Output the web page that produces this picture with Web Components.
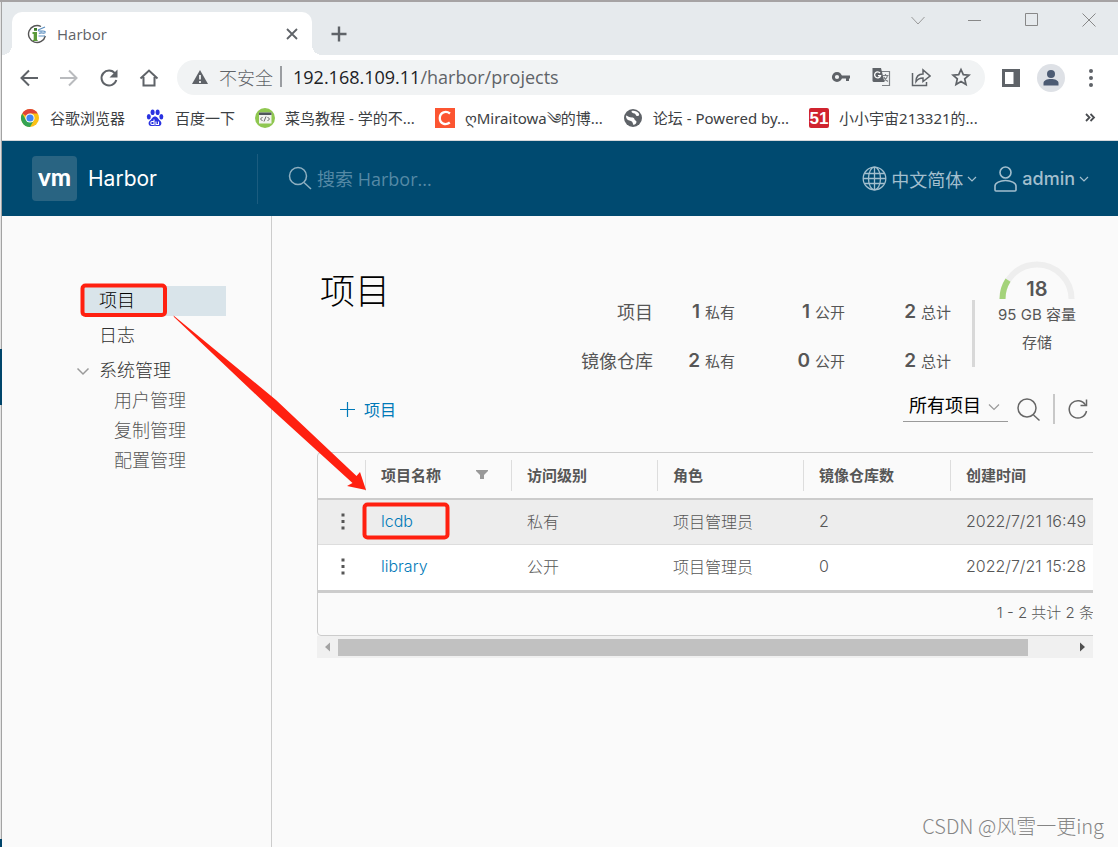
<!DOCTYPE html>
<html lang="zh-CN">
<head>
<meta charset="utf-8">
<title>Harbor</title>
<style>
  body {
    margin: 0;
    font-family: "Open Sans", "Noto Sans CJK SC", sans-serif;
    background: #fafafa;
    --harbor-font: Inter, "Noto Sans CJK SC", sans-serif;
    --text: #565656;
    --line: #ccc;
    --accent: #0079b8;
  }
</style>
</head>
<body>
<harbor-window>
  <tab-strip slot="chrome">Harbor</tab-strip>
  <address-bar slot="chrome"></address-bar>
  <bookmarks-bar slot="chrome">
    <book-mark icon="chrome">谷歌浏览器</book-mark>
    <book-mark icon="baidu">百度一下</book-mark>
    <book-mark icon="runoob">菜鸟教程 - 学的不...</book-mark>
    <book-mark icon="csdn">ღMiraitowa༄的博...</book-mark>
    <book-mark icon="globe">论坛 - Powered by...</book-mark>
    <book-mark icon="cto">小小宇宙213321的...</book-mark>
  </bookmarks-bar>
  <harbor-header slot="chrome">Harbor</harbor-header>
  <side-nav slot="side"></side-nav>
  <project-page></project-page>
</harbor-window>
<red-notes></red-notes>
<water-mark>CSDN @风雪一更ing</water-mark>

<script>
function define(name, css, html, setup) {
  const tpl = document.createElement('template');
  tpl.innerHTML = `<style>
    :host, *, *::before { box-sizing: border-box; }
    button { border: 0; padding: 0; margin: 0; background: none; font: inherit; color: inherit; display: flex; align-items: center; justify-content: center; }
    a { color: inherit; text-decoration: none; }
    svg { display: block; flex: none; }
    ${css}</style>${html}`;
  customElements.define(name, class extends HTMLElement {
    connectedCallback() {
      if (this.shadowRoot) return;
      const root = this.attachShadow({ mode: 'open' });
      root.append(tpl.content.cloneNode(true));
      if (setup) setup(this, root);
    }
  });
}

/* ---------- window frame ---------- */
define('harbor-window', `
  :host { display: flex; flex-direction: column; min-height: 100vh; border-top: 2px solid #a6a3a4; position: relative; padding-left: 2px; }
  .edge { position: absolute; left: 0; top: 0; bottom: 0; width: 2px; background: linear-gradient(#e3e3e3, #e3e3e3) left / 1px 100% no-repeat #a3a3a3; }
  .edge i { position: absolute; left: 0; top: 347px; width: 2px; height: 56px; background: #00456b; }
  .edge i + i { top: auto; bottom: 0; height: 8px; }
  .body { display: flex; flex: 1; }
  ::slotted(project-page) { flex: 1; min-width: 0; }
`, `<div class="edge"><i></i><i></i></div>
  <slot name="chrome"></slot>
  <div class="body"><slot name="side"></slot><slot></slot></div>`);

/* ---------- tab strip ---------- */
define('tab-strip', `
  :host { display: flex; height: 53px; background: #e6eaed; padding-left: 10px; }
  .tab { position: relative; align-self: flex-end; height: 43px; width: 300px; background: #fff; border-radius: 10px 10px 0 0; display: flex; align-items: center; gap: 10px; padding: 0 13px 0 15px; font-size: 15px; color: #5f6368; }
  .tab::before, .tab::after { content: ""; position: absolute; bottom: 0; width: 10px; height: 10px; }
  .tab::before { left: -10px; background: radial-gradient(circle at 0 0, transparent 10px, #fff 10px); }
  .tab::after { right: -10px; background: radial-gradient(circle at 100% 0, transparent 10px, #fff 10px); }
  .name { flex: 1; }
  .new { margin-left: 13px; width: 28px; align-self: center; margin-top: 10px; }
  .win { margin-left: auto; display: flex; height: 36px; }
  .win button { width: 57px; }
  .win button:last-child { width: 58px; }
`, `<div class="tab">
    <svg width="20" height="20" viewBox="0 0 20 20" fill="none"><path d="M14 2.500A8.500 8.500 0 1 0 18.300 12" stroke="#555" stroke-width="1.400"/><path d="M5.500 8h4.500v7.500l1 1.500H5.500l1.200-1.500V10H5.500z" fill="#5a9a3a"/><path d="M7 4h3v2.800H7z" fill="#3f7a2c"/><path d="M11 6l7-3M11 6.500c3 2 5-1 7.500 1.500M12 9.500c3-2 4 1 6.500-1M11.500 12H18" stroke="#5c8fc0" stroke-width="1.200"/></svg>
    <span class="name"><slot></slot></span>
    <button aria-label="关闭标签页"><svg width="14" height="14" viewBox="0 0 14 14"><path d="M2 2l10 10M12 2L2 12" stroke="#5f6368" stroke-width="1.800"/></svg></button>
  </div>
  <button class="new" aria-label="新标签页"><svg width="16" height="16" viewBox="0 0 16 16"><path d="M8 .5v15M.5 8h15" stroke="#5f6368" stroke-width="2.400"/></svg></button>
  <div class="win">
    <button aria-label="搜索标签页"><svg width="14" height="14" viewBox="0 0 14 14"><path d="M.5 4L7 11l6.500-7" stroke="#999" fill="none"/></svg></button>
    <button aria-label="最小化"><svg width="14" height="14" viewBox="0 0 14 14"><path d="M0 7.500h13" stroke="#888"/></svg></button>
    <button aria-label="最大化"><svg width="14" height="14" viewBox="0 0 14 14"><path d="M.5.5h12v12H.5z" stroke="#888" fill="none"/></svg></button>
    <button aria-label="关闭"><svg width="14" height="14" viewBox="0 0 14 14"><path d="M.5.5l13 13M13.500.5l-13 13" stroke="#888"/></svg></button>
  </div>`);

/* ---------- address bar ---------- */
define('address-bar', `
  :host { display: flex; align-items: center; height: 45px; background: #fff; color: #5f6368; padding: 0 15px; }
  button { width: 24px; height: 24px; }
  .nav { display: flex; gap: 16px; margin-right: 16px; }
  .pill { flex: 1; display: flex; align-items: center; height: 35px; border-radius: 18px; background: #f1f3f4; padding: 0 12px 2px 14px; font-size: 18px; }
  .warn { margin-right: 10px; }
  .safe { font-weight: 300; }
  .bar { width: 2px; height: 21px; background: #9a9da1; margin: 0 11px 0 7px; }
  .url { flex: 1; white-space: nowrap; font-size: 18px; }
  .url b { font-weight: 400; color: #202124; }
  .acts { display: flex; gap: 16px; }
  .end { display: flex; align-items: center; gap: 14px; margin-left: 14px; }
  .avatar { width: 28px; height: 28px; border-radius: 50%; background: #dee1e6; }
`, `<div class="nav">
    <button aria-label="后退"><svg width="20" height="20" viewBox="0 0 20 20" fill="none" stroke="#5f6368" stroke-width="2"><path d="M19 10H3M10 2.500L2.500 10l7.500 7.500"/></svg></button>
    <button aria-label="前进"><svg width="20" height="20" viewBox="0 0 20 20" fill="none" stroke="#b9bbbe" stroke-width="2"><path d="M1 10h16M10 2.500l7.500 7.500-7.500 7.500"/></svg></button>
    <button aria-label="重新加载"><svg width="20" height="20" viewBox="0 0 20 20" fill="none"><path d="M16 5.500A7.500 7.500 0 1 0 17.300 12" stroke="#5f6368" stroke-width="2"/><path d="M18.500 1.500v8h-8z" fill="#5f6368"/></svg></button>
    <button aria-label="主页"><svg width="20" height="20" viewBox="0 0 20 20" fill="none" stroke="#5f6368" stroke-width="2"><path d="M1.500 10.500L10 2.500l8.500 8M4.500 9v8.500h11V9"/></svg></button>
  </div>
  <div class="pill">
    <svg class="warn" width="18" height="18" viewBox="0 0 18 18"><path d="M9 2l8 14H1z" fill="#5f6368"/><path d="M9 7v4.500M9 13v2" stroke="#f1f3f4" stroke-width="1.800"/></svg>
    <span class="safe">不安全</span><span class="bar"></span>
    <span class="url"><b>192.168.109.11</b>/harbor/projects</span>
    <div class="acts">
      <button aria-label="密码"><svg width="20" height="20" viewBox="0 0 20 20"><circle cx="6" cy="10" r="3.600" fill="none" stroke="#5f6368" stroke-width="3"/><path d="M9 8.500h10v3h-1V14h-3v-2.500H9z" fill="#5f6368"/></svg></button>
      <button aria-label="翻译"><svg width="20" height="20" viewBox="0 0 20 20"><path d="M8 4.500h10.500v14H11" fill="#f1f3f4" stroke="#7c8084" stroke-width="1.200"/><path d="M1.500 1h8.500l3.500 14H3a1.500 1.500 0 0 1-1.500-1.500z" fill="#5f6368"/><path d="M9 6A3 3 0 1 0 9.500 8.700H7" fill="none" stroke="#fff" stroke-width="1.300"/><path d="M12 8.500h5.500M14.500 7v1.500M16.500 8.500c-.5 3-2 4-3.500 5.500M13 10c.5 2 2 3.500 4 4.500" fill="none" stroke="#7c8084" stroke-width="1.200"/></svg></button>
      <button aria-label="分享"><svg width="20" height="20" viewBox="0 0 20 20" fill="none" stroke="#5f6368" stroke-width="1.500"><path d="M1.500 6v12.500h14V15"/><path d="M5 14.500c0-5.500 3-7.500 7-7.500V3l7 6-7 5.500v-3.500c-3.500 0-5 .5-7 3.500z"/></svg></button>
      <button aria-label="收藏"><svg width="20" height="20" viewBox="0 0 20 20" fill="none" stroke="#5f6368" stroke-width="1.700"><path d="M10 2.500l2.300 5.200 5.700.5-4.300 3.700 1.300 5.600-5-3-5 3 1.300-5.600L2 8.200l5.700-.5z"/></svg></button>
    </div>
  </div>
  <div class="end">
    <button aria-label="侧边栏"><svg width="20" height="20" viewBox="0 0 20 20"><path d="M1 1h18v18H1z" fill="#5f6368"/><path d="M4 4h8.500v12H4z" fill="#fff"/></svg></button>
    <button class="avatar" aria-label="用户"><svg width="20" height="20" viewBox="0 0 20 20" fill="#4c5b73"><circle cx="10" cy="6" r="4"/><path d="M2.500 17.500v-2.500c0-2.500 3.500-4 7.500-4s7.500 1.500 7.500 4v2.500z"/></svg></button>
    <button aria-label="菜单"><svg width="20" height="20" viewBox="0 0 20 20" fill="#5f6368"><circle cx="10" cy="3" r="2"/><circle cx="10" cy="10" r="2"/><circle cx="10" cy="17" r="2"/></svg></button>
  </div>`);

/* ---------- bookmarks ---------- */
define('bookmarks-bar', `
  :host { display: flex; align-items: center; height: 41px; background: #fff; border-bottom: 1px solid #d5d8db; padding: 0 20px 4px 18px; gap: 20px; font-family: "Noto Sans", "Noto Sans CJK SC", sans-serif; font-size: 15px; color: #3c4043; white-space: nowrap; }
  button { margin-left: auto; }
`, `<slot></slot><button aria-label="更多书签"><svg width="16" height="16" viewBox="0 0 16 16" fill="none" stroke="#4a4d51" stroke-width="1.800"><path d="M4 4l3.500 3.500L4 11M8.500 4L12 7.500 8.500 11"/></svg></button>`);

const bookmarkIcons = {
  chrome: `<circle cx="10" cy="10" r="9" fill="#fbc116"/><path d="M10 10L2.200 5.500A9 9 0 0 1 17.800 5.500H10z" fill="#df4438"/><path d="M2.200 5.500A9 9 0 0 0 10 19l3.900-6.800L6 12z" fill="#34a353"/><circle cx="10" cy="10" r="4.600" fill="#fff"/><circle cx="10" cy="10" r="3.600" fill="#4285f4"/>`,
  baidu: `<g fill="#2932e1"><ellipse cx="3.800" cy="8.800" rx="2" ry="2.700"/><ellipse cx="7.600" cy="4.300" rx="2" ry="2.800"/><ellipse cx="12.600" cy="4.300" rx="2" ry="2.800"/><ellipse cx="16.300" cy="8.800" rx="2" ry="2.700"/><path d="M10 8.500c2.500 0 3 2.500 5 4s2 5-1 5.500c-1.500.3-2.500-.2-4-.2s-2.500.5-4 .2c-3-.5-3-4-1-5.500s2.500-4 5-4z"/></g><path d="M9 11.500v5H6.800c-1.300 0-1.300-3 0-3H9M11 13.500v3h2.500v-3" fill="none" stroke="#fff" stroke-width="1.100"/>`,
  runoob: `<circle cx="10" cy="10" r="10" fill="#8fc750"/><path d="M4 4.500h12.500v11H4z" fill="#f2f3ef"/><path d="M4 4.500h12.500V7H4z" fill="#50565b"/><path d="M7.500 9L5.500 11l2 2M12.500 9l2 2-2 2M11 8.500l-2 5" fill="none" stroke="#666" stroke-width="1"/>`,
  csdn: `<path d="M0 0h20v20H0z" fill="#fc5531"/><path d="M15 5.500C11 2.500 5 4 4.800 10c-.1 6 6 7.500 10 4.500" fill="none" stroke="#fff" stroke-width="2.300"/>`,
  globe: `<circle cx="10" cy="10" r="9" fill="#5f6368"/><path d="M3 7.500C5 8 6 9.500 9 9.500s2 2.500 3.500 3S14 16 10.500 17c-1-2-.5-3-2.500-4s-5-.5-5-5.500zM8.500 3c0 2 1.500 2 3 2.500s1 2.500 3 2.500 2-1.500 1-3-4.500-3-7-2z" fill="#fff"/>`,
  cto: `<rect width="20" height="20" rx="2" fill="#d0232e"/><text x="10" y="16" text-anchor="middle" font-family="Liberation Sans" font-weight="700" font-size="17" fill="#fff">51</text>`
};
define('book-mark', `
  :host { display: block; }
  a { display: flex; align-items: center; gap: 10px; height: 20px; line-height: 20px; }
  span { height: 20px; display: flex; align-items: center; }
`, `<a href="#"><svg width="20" height="20" viewBox="0 0 20 20"></svg><span><slot></slot></span></a>`,
(host, root) => { root.querySelector('svg').innerHTML = bookmarkIcons[host.getAttribute('icon')]; });

/* ---------- Harbor header ---------- */
define('harbor-header', `
  :host { display: flex; align-items: center; height: 75px; background: #004a70; padding: 0 29px 0 30px; font-family: var(--harbor-font); color: #a3bfce; }
  .brand { display: flex; align-items: center; gap: 11px; width: 226px; height: 50px; border-right: 1px solid #1b5c7f; font-size: 21px; color: #fff; }
  .logo { width: 45px; height: 45px; border-radius: 4px; background: #296482; display: flex; align-items: center; justify-content: center; font: 900 24px/1 Lato, sans-serif; padding-bottom: 4px; }
  label { display: flex; align-items: center; gap: 4px; flex: 1; margin-left: 30px; }
  input { border: 0; background: none; outline: 0; padding: 0; flex: 1; min-width: 0; font: 18px "Open Sans", "Noto Sans CJK SC", sans-serif; color: #fff; }
  input::placeholder { color: #5589a5; opacity: 1; }
  .menu { gap: 4px; font-size: 18px; font-weight: 500; }
  .user { margin-left: 16px; }
  .menu.lang { font-weight: 400; }
`, `<a class="brand" href="#"><span class="logo">vm</span><span><slot></slot></span></a>
  <label><svg width="25" height="25" viewBox="0 0 25 25" fill="none" stroke="#8fb0c1" stroke-width="1.500"><circle cx="10" cy="10" r="8.500"/><path d="M16 16.500l7 6.500"/></svg>
  <input type="search" aria-label="搜索" placeholder="搜索 Harbor..."></label>
  <button class="menu lang"><svg width="25" height="25" viewBox="0 0 25 25" fill="none" stroke="#a3bfce" stroke-width="1.300"><circle cx="12.500" cy="12.500" r="11.300"/><ellipse cx="12.500" cy="12.500" rx="6" ry="11.300"/><path d="M12.500 1v23M1 12.500h23M3 7.500h19M3 17.500h19"/></svg>中文简体<svg width="10" height="10" viewBox="0 0 10 10" fill="none" stroke="#a3bfce" stroke-width="1.200"><path d="M1 3l4 4 4-4"/></svg></button>
  <button class="menu user"><svg width="25" height="28" viewBox="0 0 25 28" fill="none" stroke="#a3bfce" stroke-width="1.600"><circle cx="12.500" cy="7.500" r="5.500"/><path d="M2 25v-4c0-3 5-5.500 10.500-5.500S23 18 23 21v4c0 .7-.5 1-1 1H3c-.6 0-1-.4-1-1z"/></svg>admin<svg width="10" height="10" viewBox="0 0 10 10" fill="none" stroke="#a3bfce" stroke-width="1.200"><path d="M1 3l4 4 4-4"/></svg></button>`);

/* ---------- side navigation ---------- */
define('side-nav', `
  :host { display: block; width: 270px; border-right: 1px solid var(--line); padding: 70px 45px 0 79px; font: 300 18px/30px var(--harbor-font); color: #313131; }
  a { display: block; padding-left: 18px; height: 30px; margin-bottom: 5px; }
  a.on { background: #d9e4ea; color: #000; }
  .group { height: 30px; gap: 9px; margin-left: -5px; }
  ul { list-style: none; margin: 0; padding: 0; }
  li a { padding-left: 33px; margin: 0; color: var(--text); }
`, `<nav><a class="on" href="#">项目</a><a href="#">日志</a>
  <button class="group"><svg width="14" height="14" viewBox="0 0 14 14" fill="none" stroke="#9a9a9a" stroke-width="1.500"><path d="M1.500 4.500L7 10l5.500-5.500"/></svg>系统管理</button>
  <ul><li><a href="#">用户管理</a></li><li><a href="#">复制管理</a></li><li><a href="#">配置管理</a></li></ul></nav>`);

/* ---------- statistics ---------- */
define('stat-count', `
  :host { display: flex; align-items: baseline; justify-content: flex-end; gap: 5px; font-size: 15px; line-height: 24px; }
  b { font-size: 19px; font-weight: 600; }
`, `<b></b><slot></slot>`, (host, root) => { root.querySelector('b').textContent = host.getAttribute('value'); });

define('storage-gauge', `
  :host { display: flex; flex-direction: column; align-items: center; width: 84px; text-align: center; font-size: 15px; }
  .dial { position: relative; width: 76px; height: 38px; margin-bottom: 2px; }
  b { position: absolute; left: 0; right: 0; bottom: -2px; font-size: 20px; line-height: 24px; font-weight: 600; }
  span { line-height: 28px; white-space: nowrap; }
`, `<div class="dial"><svg width="76" height="38" viewBox="0 0 76 38" fill="none" stroke-width="6"><path d="M3.500 38A34.500 34.500 0 0 1 72.500 38" stroke="#eee"/><path d="M3.500 38A34.500 34.500 0 0 1 9 19.200" stroke="#a4d37a"/></svg><b>18</b></div>
  <span>95 GB 容量</span><span>存储</span>`);

define('project-stats', `
  :host { display: flex; align-items: flex-start; color: var(--text); }
  .grid { display: grid; grid-template-columns: auto 82px 110px 106px; row-gap: 23px; margin-top: 39px; }
  .grid > span { font-size: 18px; line-height: 26px; text-align: right; }
  i { width: 3px; height: 67px; background: #d8d8d8; margin: 39px 20px 0 21px; }
`, `<div class="grid">
    <span>项目</span><stat-count value="1">私有</stat-count><stat-count value="1">公开</stat-count><stat-count value="2">总计</stat-count>
    <span>镜像仓库</span><stat-count value="2">私有</stat-count><stat-count value="0">公开</stat-count><stat-count value="2">总计</stat-count>
  </div><i></i><storage-gauge></storage-gauge>`);

/* ---------- data grid ---------- */
define('project-grid', `
  :host { display: block; color: var(--text); }
  .clip { overflow: hidden; }
  .grid { width: 824px; min-width: 100%; border: 1px solid var(--line); border-radius: 4px; }
  table { width: 100%; table-layout: fixed; border-collapse: separate; border-spacing: 0; font-size: 16px; }
  th, td { text-align: left; padding: 0; font-weight: 300; }
  th { height: 47px; border-bottom: 2px solid var(--line); font-size: 15px; font-weight: 700; vertical-align: top; }
  th div { display: flex; align-items: center; justify-content: space-between; height: 31px; margin-top: 7px; padding: 0 22px 3px 15px; border-left: 1px solid #ddd; }
  td { height: 45px; padding: 0 0 3px 16px; border-bottom: 1px solid #ddd; background: #fff; }
  tr.sel td { background: #ededed; }
  tr:last-child td { border-bottom: 0; }
  td:first-child { padding-left: 17px; }
  td a { color: var(--accent); }
  footer { border-top: 3px solid var(--line); height: 45px; padding: 7px 46px 0 0; text-align: right; font-size: 15px; line-height: 26px; font-weight: 300; }
  .bar { display: flex; align-items: center; height: 22px; background: #f0f0f0; padding: 0 5px; gap: 4px; }
  .track { flex: 1; height: 17px; }
  .track i { display: block; width: 94%; height: 17px; background: #c1c1c1; }
`, `<div class="clip"><div class="grid">
  <table>
    <colgroup><col style="width:47px"><col style="width:146px"><col style="width:146px"><col style="width:146px"><col style="width:147px"><col></colgroup>
    <thead><tr><th></th>
      <th><div>项目名称<svg width="14" height="12" viewBox="0 0 14 12"><path d="M1 2h12v1L9 7v4H5V7L1 3z" fill="#999"/></svg></div></th>
      <th><div>访问级别</div></th><th><div>角色</div></th><th><div>镜像仓库数</div></th><th><div>创建时间</div></th></tr></thead>
    <tbody></tbody>
  </table>
  <footer>1 - 2 共计 2 条</footer>
  </div></div>
  <div class="bar"><svg width="12" height="12" viewBox="0 0 12 12"><path d="M8 1.500v9L3 6z" fill="#a3a3a3"/></svg><div class="track"><i></i></div><svg width="12" height="12" viewBox="0 0 12 12"><path d="M4 1.500v9L9 6z" fill="#505050"/></svg></div>`,
(host, root) => {
  const rows = [
    ['lcdb', '私有', '项目管理员', '2', '2022/7/21 16:49'],
    ['library', '公开', '项目管理员', '0', '2022/7/21 15:28']
  ];
  root.querySelector('tbody').innerHTML = rows.map(([name, ...cells], i) => `<tr class="${i ? '' : 'sel'}">
    <td><button aria-label="操作"><svg width="16" height="18" viewBox="0 0 16 18" fill="#565656"><path d="M6.500 1.500h3v3h-3zM6.500 8h3v3h-3zM6.500 14.500h3v3h-3z"/></svg></button></td>
    <td><a href="#">${name}</a></td>${cells.map(c => `<td>${c}</td>`).join('')}</tr>`).join('');
});

/* ---------- project page ---------- */
define('project-page', `
  :host { display: block; padding: 45px 25px 0 45px; font-family: var(--harbor-font); }
  .top { display: flex; justify-content: space-between; height: 111px; padding: 0 14px 0 3px; }
  h1 { margin: 8px 0 0; font-size: 35px; line-height: 44px; font-weight: 300; color: #000; }
  .tools { display: flex; align-items: center; margin: 22px 4px 28px 23px; height: 30px; }
  .add { gap: 9px; font-size: 16px; color: var(--accent); margin-right: auto; }
  .pick { position: relative; margin-bottom: 4px; }
  select { display: block; appearance: none; border: 0; border-bottom: 1px solid #9a9a9a; border-radius: 0; background: none; width: 105px; height: 29px; padding: 0 0 2px 6px; font: 18px var(--harbor-font); color: #000; }
  .pick svg { position: absolute; right: 8px; top: 8px; pointer-events: none; }
  .find { margin-left: 8px; }
  .tools i { width: 2px; height: 30px; background: #c8c8c8; margin: 0 12px; }
`, `<div class="top"><h1>项目</h1><project-stats></project-stats></div>
  <div class="tools">
    <button class="add"><svg width="15" height="15" viewBox="0 0 15 15"><path d="M7.500 0v15M0 7.500h15" stroke="#0079b8" stroke-width="1.200"/></svg>项目</button>
    <div class="pick"><select aria-label="项目筛选"><option>所有项目</option></select><svg width="12" height="12" viewBox="0 0 12 12" fill="none" stroke="#9a9a9a" stroke-width="1.200"><path d="M1 3.500l5 5 5-5"/></svg></div>
    <button class="find" aria-label="查找"><svg width="25" height="25" viewBox="0 0 25 25" fill="none" stroke="#666" stroke-width="1.500"><circle cx="11" cy="11" r="9"/><path d="M17.500 18l6 5.500"/></svg></button>
    <i></i>
    <button aria-label="刷新"><svg width="22" height="22" viewBox="0 0 22 22" fill="none" stroke="#666" stroke-width="1.500"><path d="M18.500 7A8.700 8.700 0 1 0 19.500 13"/><path d="M19.500 1.500v6h-6"/></svg></button>
  </div>
  <project-grid></project-grid>`);

/* ---------- annotations drawn over the page ---------- */
define('red-notes', `
  :host { position: absolute; left: 80px; top: 283px; pointer-events: none; }
`, `<svg width="370" height="258" viewBox="0 0 370 258" fill="none" stroke="#ff2010" stroke-width="4">
    <rect x="2.500" y="2.500" width="82.500" height="29.500" rx="3"/>
    <rect x="284.500" y="221.500" width="83" height="33" rx="3"/>
    <path d="M93.500 32.500L196 117 276.500 193 280 189 286 207 267 203 272.500 200 189 124 94 34z" fill="#ff2010" stroke="none"/>
  </svg>`);

define('water-mark', `
  :host { position: absolute; right: 14px; top: 813px; font: 300 20px/26px "Noto Sans CJK SC", sans-serif; color: #858585; text-shadow: 0 0 1px #fff; pointer-events: none; white-space: nowrap; }
`, `<slot></slot>`);
</script>
</body>
</html>
